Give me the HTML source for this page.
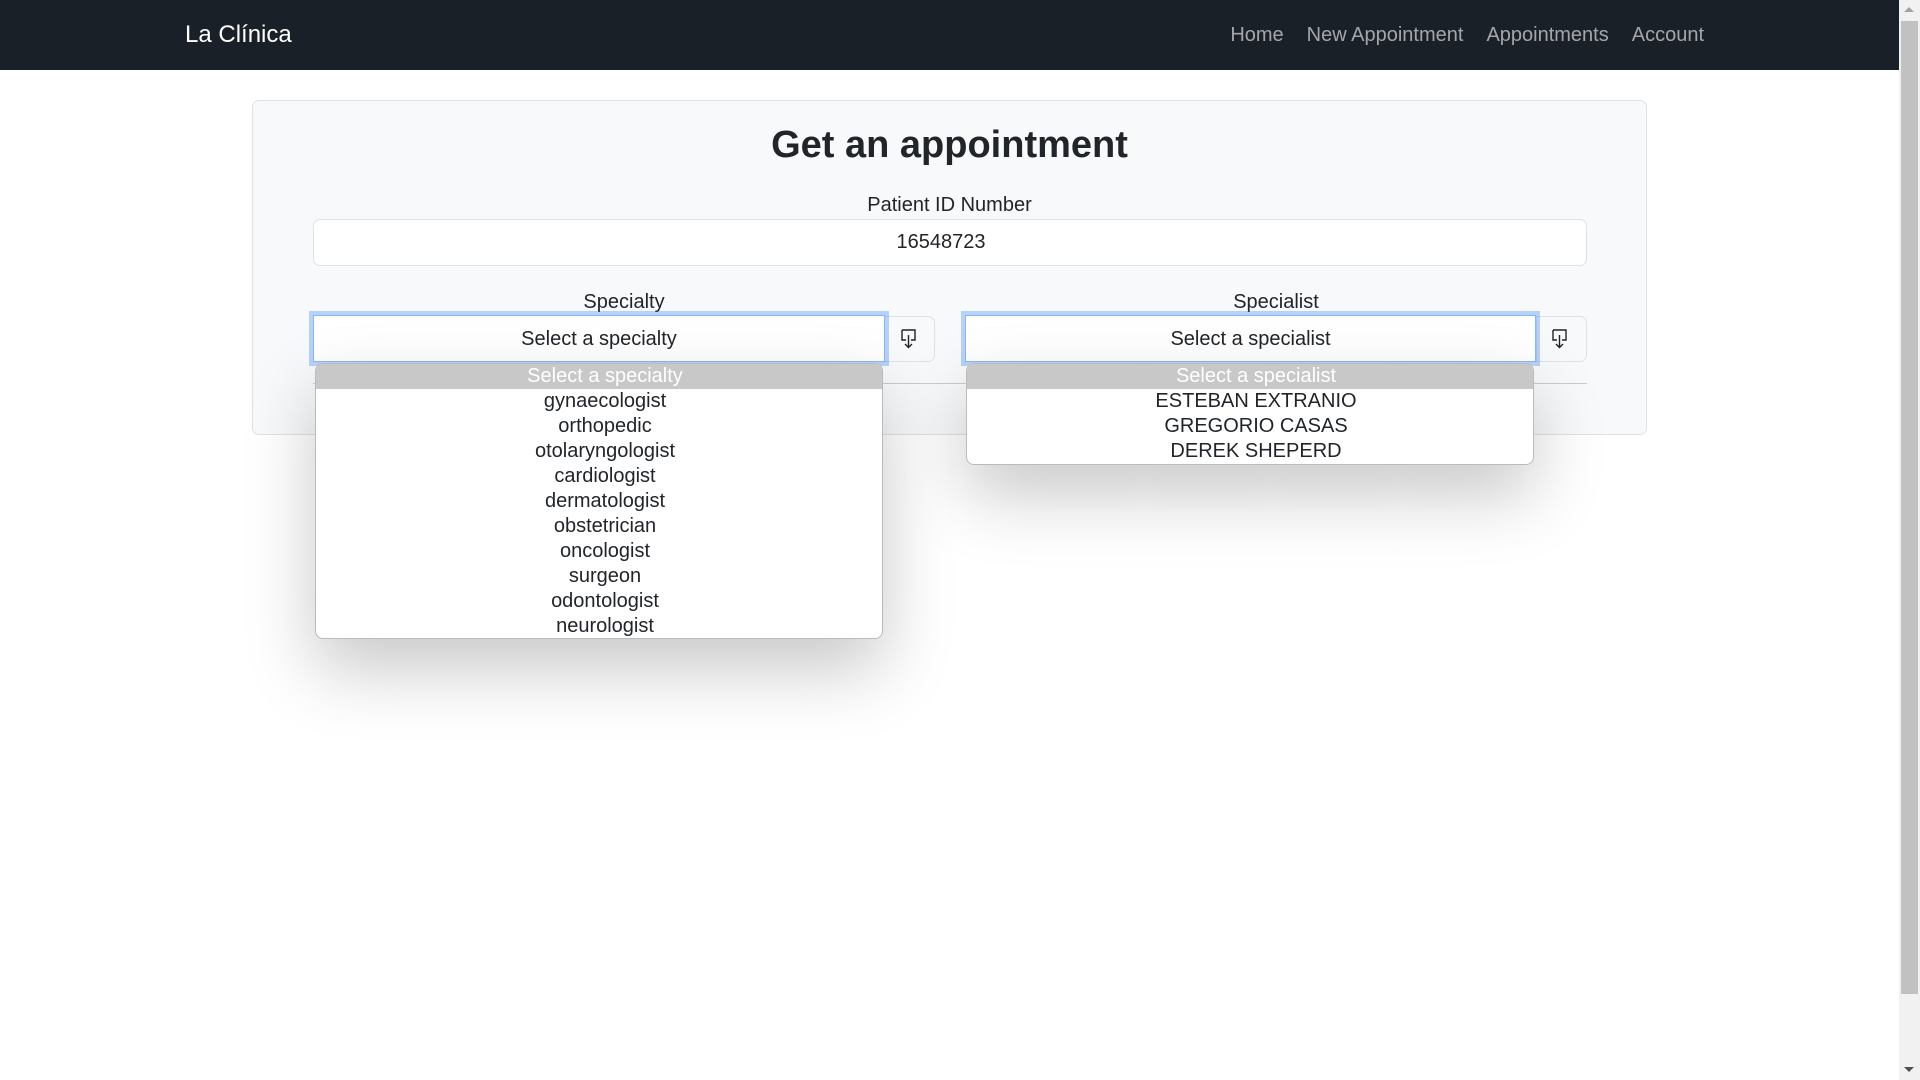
<!DOCTYPE html>
<html><head><meta charset="utf-8"><style>
*{box-sizing:border-box;margin:0;padding:0}
body{width:1920px;height:1080px;overflow:hidden;background:#fff;font-family:"Liberation Sans",Arial,sans-serif;color:#212529;position:relative}
.nav{position:absolute;left:0;top:0;width:1899px;height:70px;background:#1a2027}
.brand{position:absolute;left:185px;top:21px;font-size:24px;color:#fff}
.links{position:absolute;right:195px;top:24px;font-size:20px;color:rgba(255,255,255,.6)}
.links span{margin-left:23px}
.sb{position:absolute;left:1899px;top:0;width:21px;height:1080px;background:#f1f1f1}
.thumb{position:absolute;left:1901px;top:21px;width:17px;height:973px;background:#c1c1c1}
.card{position:absolute;left:252px;top:100px;width:1395px;height:335px;background:#f8f9fa;border:1px solid #dfe1e3;border-radius:7px}
.t{position:absolute;width:100%;text-align:center}
.inp{position:absolute;background:#fff;border:1px solid #dee2e6;border-radius:7px}
.sel{position:absolute;background:#fff;border:1px solid #86b7fe;box-shadow:0 0 0 4px rgba(13,110,253,.28);font-size:20px;text-align:center;line-height:46px}
.btn{position:absolute;border:1px solid #dee2e6;border-radius:0 7px 7px 0;background:#f8f9fa}
.list{position:absolute;background:#fff;border:1px solid #bbb;border-radius:8px;overflow:hidden;box-shadow:0 30px 70px rgba(0,0,0,.22);font-size:20px;text-align:center;padding-left:12px}
.list div{height:25px;line-height:25px;margin-left:-12px;padding-left:12px}
.list .h{background:#c8c8c8;color:#fff}
</style></head><body>
<div class="nav"><div class="brand">La Clínica</div>
<div class="links"><span>Home</span><span>New Appointment</span><span>Appointments</span><span>Account</span></div></div>
<div class="card">
<div class="t" style="top:23px;font-size:38px;font-weight:bold;">Get an appointment</div>
<div class="t" style="top:93px;font-size:20px">Patient ID Number</div>
<div class="inp" style="left:60px;top:118px;width:1274px;height:47px;text-align:center;font-size:20px;line-height:45px;padding-right:18px">16548723</div>
<div style="position:absolute;left:60px;width:622px;top:190px;font-size:20px;text-align:center">Specialty</div>
<div style="position:absolute;left:713px;width:620px;top:190px;font-size:20px;text-align:center">Specialist</div>
<div style="position:absolute;left:60px;top:282px;width:1274px;height:1px;background:#ccc"></div>
</div>
<div class="btn" style="left:884px;top:316px;width:51px;height:46px"></div>
<div class="btn" style="left:1536px;top:316px;width:51px;height:46px"></div>
<svg style="position:absolute;left:901px;top:329px" width="16" height="20" viewBox="0 0 16 20" fill="none" stroke="#222" stroke-width="1.4"><path d="M1 1h13v10h-4M5 11H1V1M7.5 6v12M4 15l3.5 3.5L11 15"/></svg>
<svg style="position:absolute;left:1552px;top:329px" width="16" height="20" viewBox="0 0 16 20" fill="none" stroke="#222" stroke-width="1.4"><path d="M1 1h13v10h-4M5 11H1V1M7.5 6v12M4 15l3.5 3.5L11 15"/></svg>
<div class="sel" style="left:313px;top:315px;width:572px;height:47px">Select a specialty</div>
<div class="sel" style="left:965px;top:315px;width:571px;height:47px">Select a specialist</div>
<div class="list" style="left:315px;top:363px;width:568px;height:276px">
<div class="h">Select a specialty</div><div>gynaecologist</div><div>orthopedic</div><div>otolaryngologist</div><div>cardiologist</div><div>dermatologist</div><div>obstetrician</div><div>oncologist</div><div>surgeon</div><div>odontologist</div><div>neurologist</div></div>
<div class="list" style="left:966px;top:363px;width:568px;height:102px">
<div class="h">Select a specialist</div><div>ESTEBAN EXTRANIO</div><div>GREGORIO CASAS</div><div>DEREK SHEPERD</div></div>
<div class="sb"></div><div class="thumb"></div>
<div style="position:absolute;left:1904px;top:7px;width:0;height:0;border-left:5px solid transparent;border-right:5px solid transparent;border-bottom:5px solid #a3a3a3"></div>
<div style="position:absolute;left:1904px;top:1067px;width:0;height:0;border-left:5px solid transparent;border-right:5px solid transparent;border-top:5px solid #505050"></div>
</body></html>
